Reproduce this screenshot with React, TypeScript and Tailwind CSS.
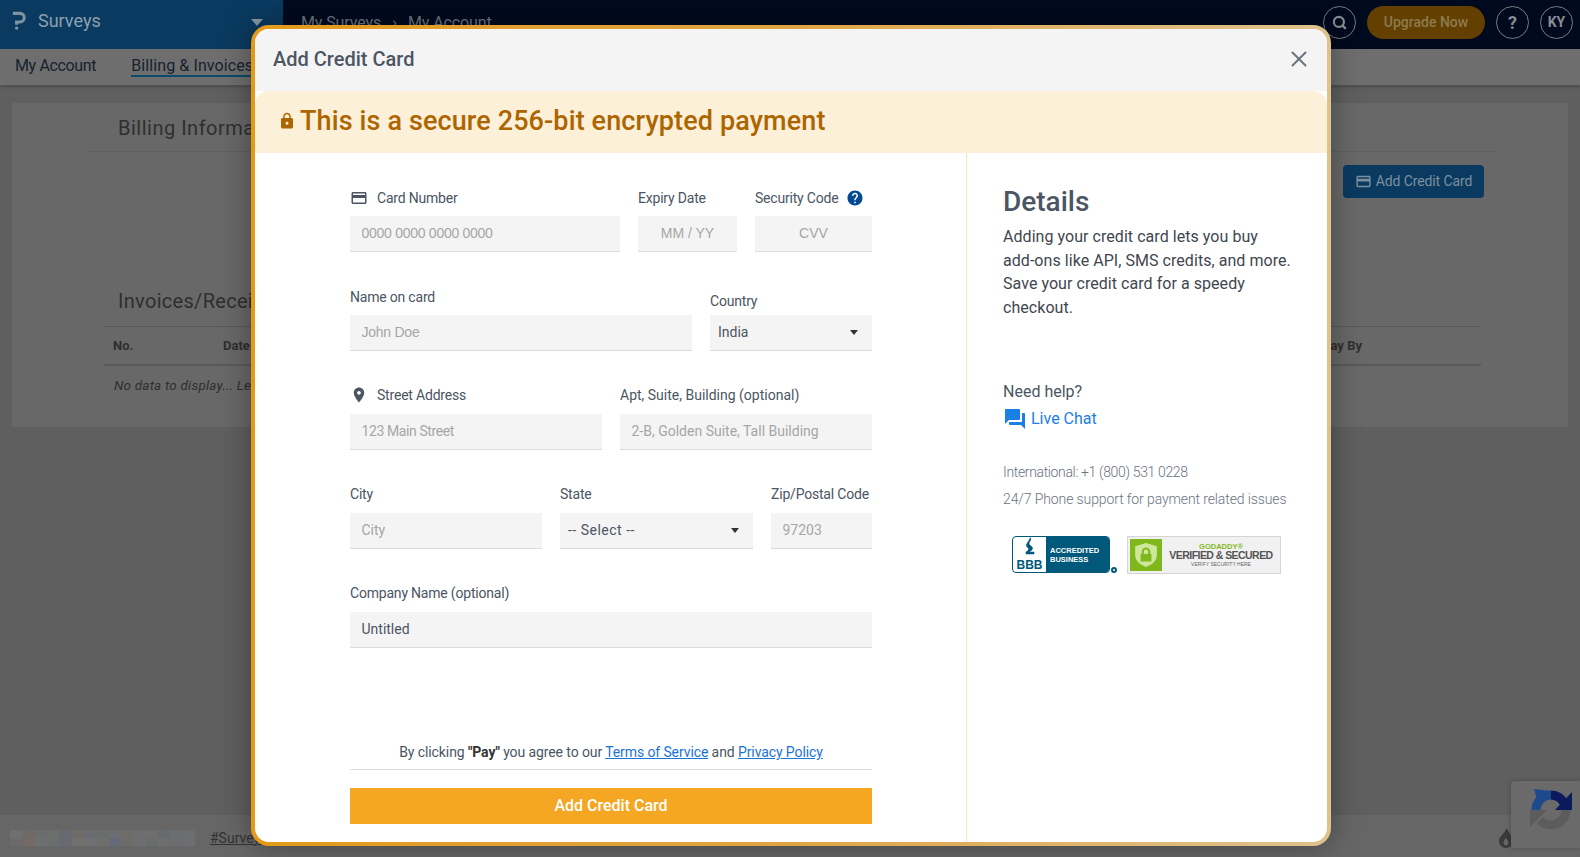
import { Search, X } from "lucide-react"
import type { ReactNode } from "react"

const blurBlocks = [
  "#6f6f6f", "#6e6a68", "#6a6d6e", "#6e6f6c", "#666a70", "#6f6b66", "#696c72", "#6b6d6c", "#6c6e72", "#6f6d68",
  "#6c6e70", "#6f6e6c", "#656b70", "#6c6d6e", "#6b6d70",
  "#6c6a6a", "#736a66", "#6c7072", "#6b6e6c", "#686a72", "#70706c", "#6e7074", "#6e6e6c", "#666a78", "#6e6c68",
  "#6c6e70", "#696c6c", "#6d6e6e", "#6c6d70", "#6c6e70",
]

function MaterialIcon({ d, className }: { d: string; className?: string }) {
  return (
    <svg viewBox="0 0 24 24" fill="currentColor" className={className}>
      <path d={d} />
    </svg>
  )
}

const cardPath =
  "M20 4H4c-1.11 0-1.99.89-1.99 2L2 18c0 1.11.89 2 2 2h16c1.11 0 2-.89 2-2V6c0-1.11-.89-2-2-2zm0 14H4v-6h16v6zm0-10H4V6h16v2z"
const placePath =
  "M12 2C8.13 2 5 5.13 5 9c0 5.25 7 13 7 13s7-7.75 7-13c0-3.87-3.13-7-7-7zm0 9.5c-1.38 0-2.5-1.12-2.5-2.5s1.12-2.5 2.5-2.5 2.5 1.12 2.5 2.5-1.12 2.5-2.5 2.5z"
const lockPath =
  "M18 8h-1V6c0-2.76-2.24-5-5-5S7 3.24 7 6v2H6c-1.1 0-2 .9-2 2v10c0 1.1.9 2 2 2h12c1.1 0 2-.9 2-2V10c0-1.1-.9-2-2-2zm-6 9c-1.1 0-2-.9-2-2s.9-2 2-2 2 .9 2 2-.9 2-2 2zm3.1-9H8.9V6c0-1.71 1.39-3.1 3.1-3.1 1.71 0 3.1 1.39 3.1 3.1v2z"
const forumPath =
  "M21 6h-2v9H6v2c0 .55.45 1 1 1h11l4 4V7c0-.55-.45-1-1-1zm-4 6V3c0-.55-.45-1-1-1H3c-.55 0-1 .45-1 1v14l4-4h10c.55 0 1-.45 1-1z"
const helpPath =
  "M12 2C6.48 2 2 6.48 2 12s4.48 10 10 10 10-4.48 10-10S17.52 2 12 2zm1 17h-2v-2h2v2zm2.07-7.75l-.9.92C13.45 12.9 13 13.5 13 15h-2v-.5c0-1.1.45-2.1 1.17-2.83l1.24-1.26c.37-.36.59-.86.59-1.41 0-1.1-.9-2-2-2s-2 .9-2 2H8c0-2.21 1.79-4 4-4s4 1.79 4 4c0 .88-.36 1.68-.93 2.25z"

function Field({
  label,
  width,
  labelGap = "mb-[6px]",
  children,
}: {
  label: ReactNode
  width: string
  labelGap?: string
  children: ReactNode
}) {
  return (
    <div className={width}>
      <div className={`flex h-[26px] items-center text-[14px] tracking-[-0.2px] text-[#4b5563] ${labelGap}`}>{label}</div>
      {children}
    </div>
  )
}

function TextInput({
  placeholder,
  value,
  className = "",
}: {
  placeholder?: string
  value?: string
  className?: string
}) {
  return (
    <input
      readOnly
      placeholder={placeholder}
      value={value}
      className={`block h-9 w-full border-b border-[#dcdcdc] bg-[#f4f4f4] px-[11.5px] pb-[2px] text-[14px] text-[#4b5563] outline-none placeholder:text-[#a6a6a6] ${className}`}
    />
  )
}

function SelectBox({ value, className = "" }: { value: string; className?: string }) {
  return (
    <div className="flex h-9 w-full items-center justify-between border-b border-[#dcdcdc] bg-[#f4f4f4] pb-[1px] pl-2 pr-[14px] text-[14px] text-[#4b5563]">
      <span className={className}>{value}</span>
      <span className="h-0 w-0 border-x-[4.5px] border-t-[5px] border-x-transparent border-t-[#333]" />
    </div>
  )
}

function Background() {
  return (
    <div className="flex h-full flex-col bg-[#5f5f5f]">
      <header className="flex h-[49px] shrink-0 items-center bg-[#000a1e] pb-[4px]">
        <div className="-mb-[4px] flex h-[49px] w-[283px] items-center bg-[#0a3a60] pb-[8px] pl-3">
          <svg viewBox="0 0 14 20" className="mr-[12px] h-[19px] w-[14px]" fill="none">
            <path d="M0.5 2.5 H8 A4.5 4.5 0 0 1 8 11.5 H4.5 V14.5" stroke="#7f93a3" strokeWidth="3.2" />
            <circle cx="4.5" cy="18" r="1.8" fill="#7f93a3" />
          </svg>
          <span className="text-[18px] text-[#8ba0b0]">Surveys</span>
          <span className="ml-[150px] mt-1 h-0 w-0 border-x-[6px] border-t-[7px] border-x-transparent border-t-[#8599a8]" />
        </div>
        <div className="ml-[18px] flex gap-[11px] text-[16px] tracking-[-0.1px] text-[#6f7682]">
          <span>My Surveys</span>
          <span>›</span>
          <span>My Account</span>
        </div>
        <div className="ml-auto flex items-center pr-[7px]">
          <span className="flex h-[33px] w-[33px] items-center justify-center rounded-full border border-[#777c85] text-[#8a8d92]">
            <Search size={15} strokeWidth={3.5} />
          </span>
          <span className="ml-[11px] flex h-[33px] w-[118px] items-center justify-center rounded-full bg-[#634000] text-[14px] font-medium text-[#8d7a4e]">
            Upgrade Now
          </span>
          <span className="ml-[11px] flex h-[33px] w-[33px] items-center justify-center rounded-full border border-[#777c85] text-[18px] font-bold text-[#8a8d92]">
            ?
          </span>
          <span className="ml-[11px] flex h-[33px] w-[33px] items-center justify-center rounded-full border border-[#777c85] text-[14px] font-bold text-[#8a8d92]">
            KY
          </span>
        </div>
      </header>
      <nav className="flex h-[36px] shrink-0 items-center gap-[35px] bg-[#6e6e6e] pb-[2px] pl-[15px] text-[16px] text-[#16222e] shadow-[0_2px_3px_rgba(0,0,0,0.2)]">
        <span className="tracking-[-0.35px]">My Account</span>
        <span className="border-b-2 border-[#0a4a6a] leading-[19px] tracking-[0.1px]">Billing &amp; Invoices</span>
      </nav>
      <main className="mx-3 mt-[18px] h-[324px] shrink-0 bg-[#686868] text-[#2f2f2f]">
        <div className="ml-[76px] mr-[73px] h-[49px] border-b border-[#5f5f5f] pl-[30px] pt-[10px] text-[20px] tracking-[0.5px]">
          Billing Information
        </div>
        <div className="mr-[84px] mt-[13px] flex justify-end">
          <span className="flex h-[33px] w-[141px] items-center justify-center gap-1 rounded-sm bg-[#0a3a60] text-[14px] tracking-[-0.1px] text-[#7d8f9d]">
            <MaterialIcon d={cardPath} className="h-[17px] w-[17px]" />
            Add Credit Card
          </span>
        </div>
        <div className="ml-[92px] mr-[87px] mt-[88px] h-[41px] border-b border-[#5a5a5a] pl-[14px] text-[20px] tracking-[0.3px]">
          Invoices/Receipts
        </div>
        <div className="ml-[92px] mr-[87px] flex h-[39px] items-center border-b-2 border-[#5a5a5a] pl-[9px] text-[13px] font-bold">
          <span className="w-[110px]">No.</span>
          <span>Date</span>
          <span className="ml-auto mr-[119px]">Pay By</span>
        </div>
        <div className="ml-[102px] mt-[9px] text-[13.5px] italic tracking-[0.2px]">No data to display... Learn more</div>
      </main>
      <footer className="mt-auto flex h-[42px] shrink-0 items-center bg-[#666666] pl-[10px] pt-[4px]">
        <div className="grid h-4 w-[185px] grid-cols-15">
          {blurBlocks.map((color, i) => (
            <span key={i} style={{ backgroundColor: color }} />
          ))}
        </div>
        <span className="ml-[15px] text-[14px] text-[#333] underline">#Surveys</span>
        <svg viewBox="0 0 14 20" className="ml-[1232px] h-[20px] w-[14px]" fill="#3a3a3a">
          <path d="M8 0 C9 5 14 8 14 13 A7 7 0 0 1 0 13 C0 9 4 7 8 0 Z M7 10 C5 12 4.5 13 4.5 15 A2.5 2.5 0 0 0 9.5 15 C9.5 13 8 12 7 10 Z" fillRule="evenodd" />
        </svg>
      </footer>
    </div>
  )
}

function Recaptcha() {
  return (
    <div className="absolute bottom-[9px] right-0 h-[67px] w-[69px] rounded-l-sm bg-[#6a6a6a] pl-[19px] pt-2 shadow-[0_0_5px_rgba(0,0,0,0.25)]">
      <svg viewBox="0 0 42 42" className="h-[42px] w-[42px]" fill="none">
        <path d="M6 21 A15 15 0 0 1 21 6" stroke="#1d4a8c" strokeWidth="9" />
        <path d="M21 6 A15 15 0 0 1 34 14" stroke="#0a1a5c" strokeWidth="9" />
        <path d="M4 0 L20 2 L8 14 Z" fill="#1d4a8c" />
        <path d="M42 3 L42 21 L25 21 Z" fill="#0a1a5c" />
        <path d="M36 21 A15 15 0 0 1 10 31" stroke="#5c5c5c" strokeWidth="9" />
        <path d="M0 21 L17 21 L0 38 Z" fill="#5c5c5c" />
      </svg>
    </div>
  )
}

function BbbBadge() {
  return (
    <div className="flex items-end">
      <div className="flex h-[37px] w-[98px] overflow-hidden rounded-[4px] border border-[#00587a] bg-white">
        <div className="flex w-[33px] flex-col items-center justify-end pb-[1px] font-['Liberation_Sans',sans-serif] text-[12px] font-bold leading-none text-[#00587a]">
          <svg viewBox="0 0 14 24" className="mb-[1px] h-[21px] w-[12px]" fill="#00587a">
            <path d="M7 0 C11 3 4 6 7 9 C12 12 11 15 6 17 L12 17 L12 20 L2 20 L2 17 C6 15 6 13 3 11 C1 8 6 5 7 0 Z" />
          </svg>
          BBB
        </div>
        <div className="flex flex-1 flex-col justify-center bg-[#00587a] pl-[4px] font-['Liberation_Sans',sans-serif] text-[7.5px] font-bold leading-[9px] text-white">
          <span>ACCREDITED</span>
          <span>BUSINESS</span>
        </div>
      </div>
      <span className="ml-[1px] h-[6px] w-[6px] rounded-full border-2 border-[#00587a]" />
    </div>
  )
}

function GodaddyBadge() {
  return (
    <div className="flex h-[38px] w-[154px] items-center border border-[#d5d5d5] bg-[#f1f1f1] pl-[2px] font-['Liberation_Sans',sans-serif]">
      <div className="flex h-8 w-8 items-center justify-center bg-[#7fb81c]">
        <svg viewBox="0 0 24 24" className="h-[26px] w-[26px]">
          <path d="M12 1 L22 4 V12 C22 18 17 21 12 23 C7 21 2 18 2 12 V4 Z" fill="#cfe79b" />
          <path d="M8 11 V9 A4 4 0 0 1 16 9 V11 H17 V18 H7 V11 Z M10 11 H14 V9 A2 2 0 0 0 10 9 Z" fill="#7fb81c" fillRule="evenodd" />
        </svg>
      </div>
      <div className="flex flex-1 flex-col items-center text-center leading-none">
        <span className="text-[7.5px] font-bold text-[#84b81c]">GODADDY®</span>
        <span className="text-[10.5px] font-bold tracking-[-0.55px] text-[#555]">VERIFIED &amp; SECURED</span>
        <span className="mt-[1px] text-[5px] text-[#666]">VERIFY SECURITY HERE</span>
      </div>
    </div>
  )
}

function CreditCardModal() {
  const arial = "font-['Liberation_Sans',sans-serif]"
  return (
    <div className="absolute left-[251px] top-[25px] h-[821px] w-[1080px] rounded-[18px] bg-gradient-to-r from-[#e39a17] via-[#dfa542] to-[#dfc28c] p-1 shadow-[0_0_30px_rgba(0,0,0,0.35)]">
      <div className="flex h-full flex-col overflow-hidden rounded-[14px] bg-white">
        <div className="flex h-[62px] shrink-0 items-center justify-between bg-[#f4f4f4] pb-[2px] pl-[18px] pr-[15px]">
          <h2 className="text-[20px] font-medium text-[#4b5563]">Add Credit Card</h2>
          <X size={26} strokeWidth={1.8} className="text-[#6b7280]" />
        </div>
        <div className="flex h-[62px] shrink-0 items-center rounded-t-[14px] bg-[#fdf0d9] pb-[2px] pl-[23px] text-[#ad6500]">
          <MaterialIcon d={lockPath} className="mr-[4px] h-[18px] w-[18px]" />
          <span className="text-[27px] font-medium tracking-[0.12px]">This is a secure 256-bit encrypted payment</span>
        </div>
        <div className="flex min-h-0 flex-1">
          <section className="flex w-[712px] shrink-0 flex-col border-r border-[#fbe3bd] pb-[18px] pl-[95px] pr-[94px] pt-[32px]">
            <div className="flex flex-col gap-[31px]">
              <div className="mb-[1px] flex gap-[18px]">
                <Field
                  width="w-[270px]"
                  labelGap="mb-[5px]"
                  label={
                    <>
                      <MaterialIcon d={cardPath} className="mr-[9px] h-[18px] w-[18px] text-[#4b5563]" />
                      Card Number
                    </>
                  }
                >
                  <TextInput placeholder="0000 0000 0000 0000" className={`${arial} tracking-[-0.27px]`} />
                </Field>
                <Field width="w-[99px]" labelGap="mb-[5px]" label="Expiry Date">
                  <TextInput placeholder="MM / YY" className={`${arial} text-center`} />
                </Field>
                <Field
                  width="w-[117px]"
                  labelGap="mb-[5px]"
                  label={
                    <>
                      Security Code
                      <MaterialIcon d={helpPath} className="ml-[8px] h-[18px] w-[18px] text-[#004a94]" />
                    </>
                  }
                >
                  <TextInput placeholder="CVV" className={`${arial} text-center`} />
                </Field>
              </div>
              <div className="flex items-end gap-[18px]">
                <Field width="w-[342px]" labelGap="mb-[5px]" label="Name on card">
                  <TextInput placeholder="John Doe" className={`${arial} tracking-[-0.25px]`} />
                </Field>
                <Field width="w-[162px]" labelGap="mb-[1px]" label="Country">
                  <SelectBox value="India" />
                </Field>
              </div>
              <div className="flex gap-[18px]">
                <Field
                  width="w-[252px]"
                  label={
                    <>
                      <MaterialIcon d={placePath} className="mr-[9px] h-[18px] w-[18px] text-[#4b5563]" />
                      Street Address
                    </>
                  }
                >
                  <TextInput placeholder="123 Main Street" className="tracking-[-0.4px]" />
                </Field>
                <Field width="w-[252px]" label={<span className="tracking-[0px]">Apt, Suite, Building (optional)</span>}>
                  <TextInput placeholder="2-B, Golden Suite, Tall Building" />
                </Field>
              </div>
              <div className="flex gap-[18px]">
                <Field width="w-[192px]" label="City">
                  <TextInput placeholder="City" />
                </Field>
                <Field width="w-[193px]" label="State">
                  <SelectBox value="-- Select --" className="tracking-[0.5px]" />
                </Field>
                <Field width="w-[101px]" label="Zip/Postal Code">
                  <TextInput placeholder="97203" />
                </Field>
              </div>
              <Field width="w-full" label="Company Name (optional)">
                <TextInput value="Untitled" />
              </Field>
            </div>
            <div className="mt-auto">
              <p className="border-b border-[#dcdcdc] pb-[7px] text-center text-[14px] leading-[20px] tracking-[-0.1px] text-[#4b5563]">
                By clicking <b className="text-[#333]">"Pay"</b> you agree to our{" "}
                <a className="text-[#1a73d9] underline">Terms of Service</a> and{" "}
                <a className="text-[#1a73d9] underline">Privacy Policy</a>
              </p>
              <button className="mt-[18px] block h-9 w-full bg-[#f5a623] text-[16px] font-medium text-white">
                Add Credit Card
              </button>
            </div>
          </section>
          <aside className="flex-1 pl-[36px] pt-[29px] text-[#3f4650]">
            <h3 className="text-[28px] font-medium leading-[40px] text-[#4b5563]">Details</h3>
            <p className="mt-[3px] whitespace-nowrap text-[16px] leading-[23.7px] tracking-[0.05px]">
              Adding your credit card lets you buy
              <br />
              add-ons like API, SMS credits, and more.
              <br />
              Save your credit card for a speedy
              <br />
              checkout.
            </p>
            <p className="mt-[60px] text-[16px] leading-[24px] text-[#4b5563]">Need help?</p>
            <a className="mt-[3px] flex items-center text-[16px] leading-[24px] text-[#1a80e5]">
              <MaterialIcon d={forumPath} className="mr-[4px] h-6 w-6" />
              Live Chat
            </a>
            <p className="mt-[28px] text-[14px] font-light leading-[27px] tracking-[-0.35px] text-[#6b7280]">
              International: +1 (800) 531 0228
            </p>
            <p className="text-[14px] font-light leading-[27px] tracking-[-0.11px] text-[#6b7280]">
              24/7 Phone support for payment related issues
            </p>
            <div className="ml-[9px] mt-[23px] flex items-center gap-[10px]">
              <BbbBadge />
              <GodaddyBadge />
            </div>
          </aside>
        </div>
      </div>
    </div>
  )
}

export default function App() {
  return (
    <div className="relative h-[857px] w-[1580px] overflow-hidden font-['Roboto',sans-serif]">
      <Background />
      <Recaptcha />
      <CreditCardModal />
    </div>
  )
}
